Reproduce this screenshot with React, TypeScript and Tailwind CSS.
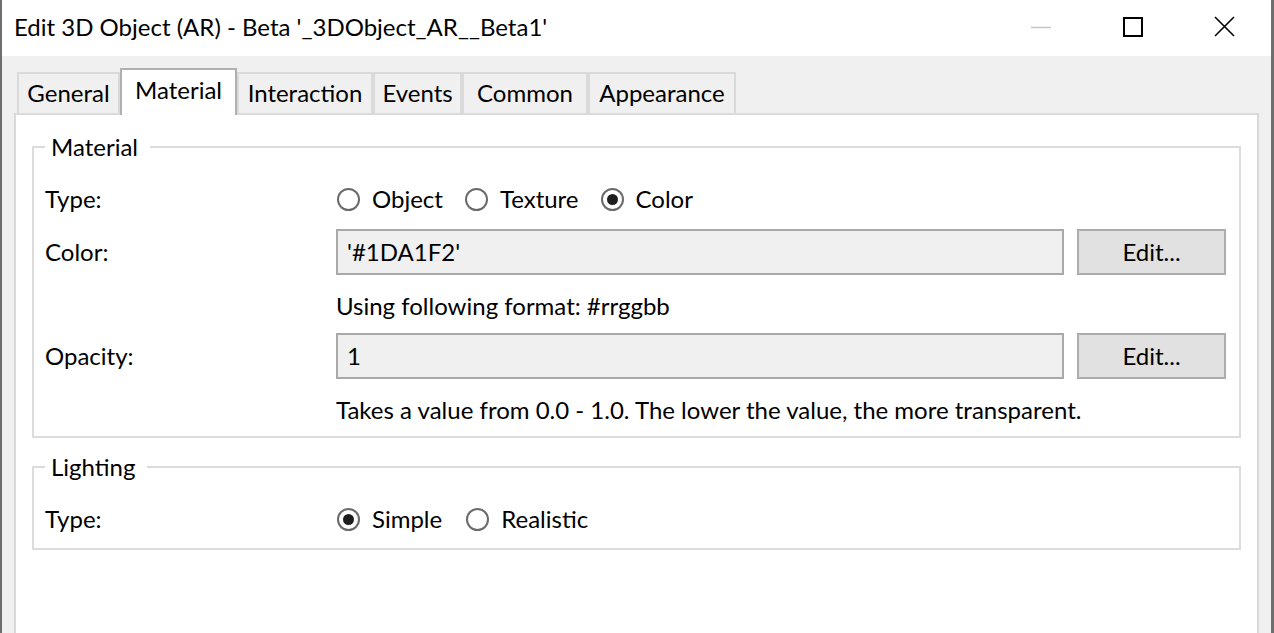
import React from "react";

const tabs = [
  { name: "General", w: "w-[103px]" },
  { name: "Material", w: "w-[117px]", active: true },
  { name: "Interaction", w: "w-[136px]" },
  { name: "Events", w: "w-[89px]" },
  { name: "Common", w: "w-[126px]" },
  { name: "Appearance", w: "w-[148px]" },
];

const Radio = ({ label, checked }: { label: string; checked?: boolean }) => (
  <label className="flex items-center gap-[12px]">
    <span className="flex h-[23px] w-[23px] items-center justify-center rounded-full border-2 border-[#6a6a6a] bg-white">
      {checked && <span className="h-[11px] w-[11px] rounded-full bg-[#1e1e1e]" />}
    </span>
    <span>{label}</span>
  </label>
);

const Group = ({ title, children, className }: { title: string; children: React.ReactNode; className?: string }) => (
  <fieldset className={"mx-[16px] border-2 border-[#dcdcdc] pl-[11px] pr-[13px] " + (className ?? "")}>
    <legend className="pl-[6px] pr-[12px] leading-[32px]">{title}</legend>
    {children}
  </fieldset>
);

const Row = ({ label, children, className }: { label: string; children: React.ReactNode; className?: string }) => (
  <div className={"flex h-[46px] items-center " + (className ?? "")}>
    <div className="w-[291px] shrink-0">{label}</div>
    <div className="flex flex-1 items-center">{children}</div>
  </div>
);

const Hint = ({ children, className }: { children: React.ReactNode; className?: string }) => (
  <div className={"pl-[291px] leading-[32px] " + (className ?? "")}>{children}</div>
);

const Field = ({ value }: { value: string }) => (
  <>
    <div className="flex h-[46px] flex-1 items-center border-2 border-[#a9a9a9] bg-[#f0f0f0] pl-[9px]">{value}</div>
    <button className="ml-[13px] h-[46px] w-[149px] border-2 border-[#adadad] bg-[#e1e1e1]">Edit...</button>
  </>
);

export default function App() {
  return (
    <div
      className="flex h-[633px] w-[1274px] flex-col overflow-hidden border-l-2 border-r-[3px] border-[#6e6e6e] bg-[#f0f0f0] text-[24px] leading-[32px] text-black"
      style={{ fontFamily: 'Lato, "Noto Sans", sans-serif' }}
    >
      {/* title bar */}
      <div className="flex h-[56px] shrink-0 items-center bg-white">
        <div className="flex-1 pb-[2px] pl-[12px]">Edit 3D Object (AR) - Beta '_3DObject_AR__Beta1'</div>
        <div className="flex h-full pb-[3px]">
          <div className="flex w-[92px] items-center justify-center">
            <svg width="20" height="20" viewBox="0 0 20 20">
              <path d="M0 10.5h20" stroke="#c6c6c6" strokeWidth="1.5" />
            </svg>
          </div>
          <div className="flex w-[92px] items-center justify-center">
            <svg width="20" height="20" viewBox="0 0 20 20">
              <rect x="1" y="1" width="18" height="18" fill="none" stroke="#000" strokeWidth="2" />
            </svg>
          </div>
          <div className="flex w-[92px] items-center justify-center pr-[2px]">
            <svg width="21" height="21" viewBox="0 0 21 21">
              <path d="M1 1L20 20M20 1L1 20" stroke="#000" strokeWidth="1.6" />
            </svg>
          </div>
        </div>
      </div>

      {/* body */}
      <div className="flex flex-1 flex-col px-[12px] pt-[12px]">
        <div className="flex h-[45px] items-end pl-[3px]">
          {tabs.map((t) =>
            t.active ? (
              <div
                key={t.name}
                className={`relative z-10 -mb-[2px] flex h-[47px] items-center justify-center border-2 border-b-0 border-[#b0b0b0] bg-white pb-[6px] ${t.w}`}
              >
                {t.name}
              </div>
            ) : (
              <div
                key={t.name}
                className={`flex h-[41px] items-center justify-center border-2 border-b-0 border-[#dadada] bg-[#f0f0f0] pb-[1px] ${t.w}`}
              >
                {t.name}
              </div>
            )
          )}
        </div>

        <div className="flex-1 border-2 border-b-0 border-[#dadada] bg-white pt-[16px]">
          <Group title="Material" className="pb-[10px]">
            <Row label="Type:" className="mt-[13px]">
              <div className="flex items-center gap-[22px] pl-[1px]">
                <Radio label="Object" />
                <Radio label="Texture" />
                <Radio label="Color" checked />
              </div>
            </Row>
            <Row label="Color:" className="mt-[7px]">
              <Field value="'#1DA1F2'" />
            </Row>
            <Hint className="mt-[15px]">Using following format: #rrggbb</Hint>
            <Row label="Opacity:" className="mt-[11px]">
              <Field value="1" />
            </Row>
            <Hint className="mt-[15px]">Takes a value from 0.0 - 1.0. The lower the value, the more transparent.</Hint>
          </Group>

          <Group title="Lighting" className="mt-[13px] pb-[6px]">
            <Row label="Type:" className="mt-[13px]">
              <div className="flex items-center gap-[24px] pl-[1px]">
                <Radio label="Simple" checked />
                <Radio label="Realistic" />
              </div>
            </Row>
          </Group>
        </div>
      </div>
    </div>
  );
}
